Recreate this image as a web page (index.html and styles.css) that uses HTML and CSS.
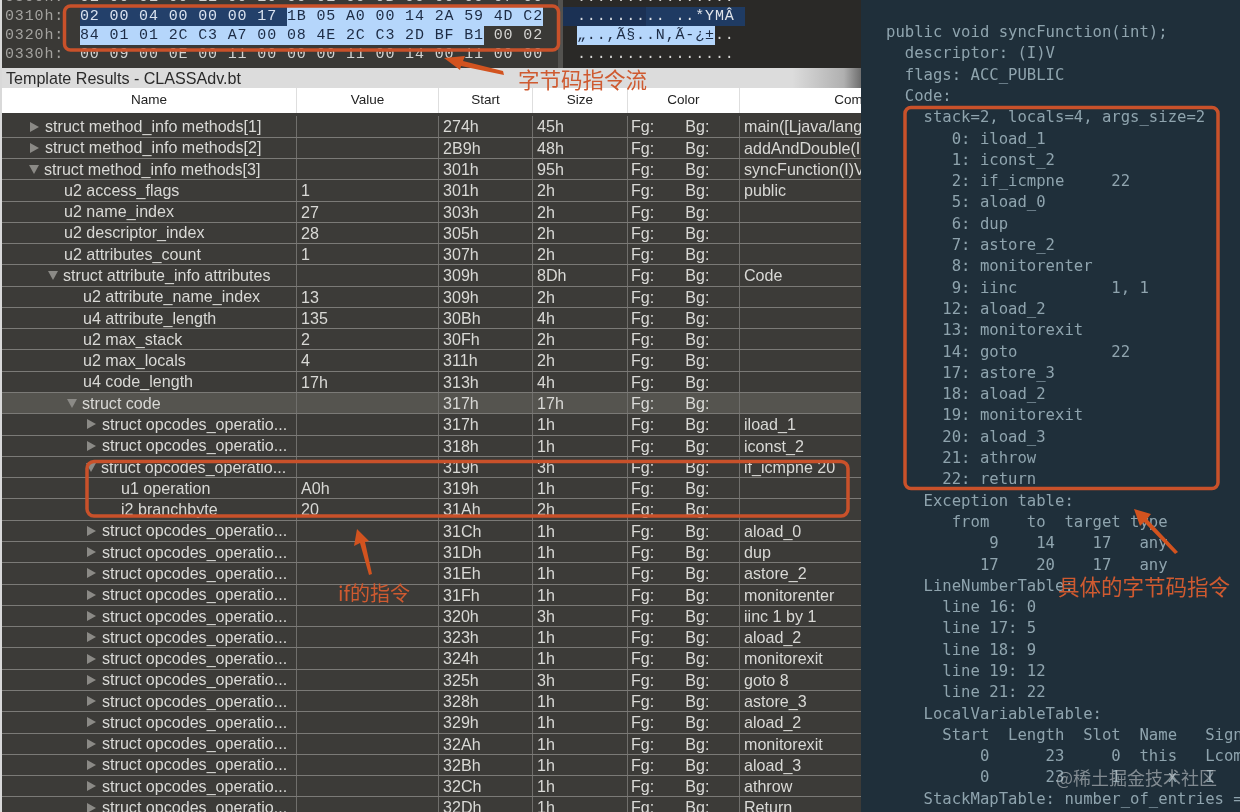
FILE: index.html
```html
<!DOCTYPE html>
<html lang="zh">
<head>
<meta charset="utf-8">
<title>Template Results - CLASSAdv.bt</title>
<link rel="stylesheet" href="styles.css">
</head>
<body>
<div class="page">
  <section class="editor">
    <div class="hex">
      <div class="hex-bytes">
        <div class="hex-row"><span class="addr">0300h:</span><span class="bytes">01 00 01 00 1E 00 10 00 01 00 0B 00 00 00 07 00</span></div>
        <div class="hex-row"><span class="addr">0310h:</span><span class="bytes"><span class="sel-dark">02 00 04 00 00 00 17 </span><span class="sel-light">1B 05 A0 00 14 2A 59 4D C2</span></span></div>
        <div class="hex-row"><span class="addr">0320h:</span><span class="bytes"><span class="sel-light">84 01 01 2C C3 A7 00 08 4E 2C C3 2D BF B1</span> 00 02</span></div>
        <div class="hex-row"><span class="addr">0330h:</span><span class="bytes">00 09 00 0E 00 11 00 00 00 11 00 14 00 11 00 00</span></div>
      </div>
      <div class="hex-ascii">
        <div class="ascii-row">................</div>
        <div class="ascii-row"><span class="sel-deep">.......</span><span class="sel-navy">.. ..*YMÂ</span></div>
        <div class="ascii-row"><span class="sel-light">„..,Ã§..N,Ã-¿±</span>..</div>
        <div class="ascii-row">................</div>
      </div>
    </div>
    <div class="title">Template Results - CLASSAdv.bt</div>
    <div class="row head"><span>Name</span><span>Value</span><span>Start</span><span>Size</span><span>Color</span><span>Comment</span></div>
    <div class="rows">
      <div class="row"><span class="name l0"><i class="tri"></i>struct method_info methods[1]</span><span></span><span>274h</span><span>45h</span><span class="fgbg"><b>Fg:</b><b>Bg:</b></span><span>main([Ljava/lang/String;)V</span></div>
      <div class="row"><span class="name l0"><i class="tri"></i>struct method_info methods[2]</span><span></span><span>2B9h</span><span>48h</span><span class="fgbg"><b>Fg:</b><b>Bg:</b></span><span>addAndDouble(II)V</span></div>
      <div class="row"><span class="name l0"><i class="tri open"></i>struct method_info methods[3]</span><span></span><span>301h</span><span>95h</span><span class="fgbg"><b>Fg:</b><b>Bg:</b></span><span>syncFunction(I)V</span></div>
      <div class="row"><span class="name l1">u2 access_flags</span><span>1</span><span>301h</span><span>2h</span><span class="fgbg"><b>Fg:</b><b>Bg:</b></span><span>public</span></div>
      <div class="row"><span class="name l1">u2 name_index</span><span>27</span><span>303h</span><span>2h</span><span class="fgbg"><b>Fg:</b><b>Bg:</b></span><span></span></div>
      <div class="row"><span class="name l1">u2 descriptor_index</span><span>28</span><span>305h</span><span>2h</span><span class="fgbg"><b>Fg:</b><b>Bg:</b></span><span></span></div>
      <div class="row"><span class="name l1">u2 attributes_count</span><span>1</span><span>307h</span><span>2h</span><span class="fgbg"><b>Fg:</b><b>Bg:</b></span><span></span></div>
      <div class="row"><span class="name l1"><i class="tri open"></i>struct attribute_info attributes</span><span></span><span>309h</span><span>8Dh</span><span class="fgbg"><b>Fg:</b><b>Bg:</b></span><span>Code</span></div>
      <div class="row"><span class="name l2">u2 attribute_name_index</span><span>13</span><span>309h</span><span>2h</span><span class="fgbg"><b>Fg:</b><b>Bg:</b></span><span></span></div>
      <div class="row"><span class="name l2">u4 attribute_length</span><span>135</span><span>30Bh</span><span>4h</span><span class="fgbg"><b>Fg:</b><b>Bg:</b></span><span></span></div>
      <div class="row"><span class="name l2">u2 max_stack</span><span>2</span><span>30Fh</span><span>2h</span><span class="fgbg"><b>Fg:</b><b>Bg:</b></span><span></span></div>
      <div class="row"><span class="name l2">u2 max_locals</span><span>4</span><span>311h</span><span>2h</span><span class="fgbg"><b>Fg:</b><b>Bg:</b></span><span></span></div>
      <div class="row"><span class="name l2">u4 code_length</span><span>17h</span><span>313h</span><span>4h</span><span class="fgbg"><b>Fg:</b><b>Bg:</b></span><span></span></div>
      <div class="row current"><span class="name l2"><i class="tri open"></i>struct code</span><span></span><span>317h</span><span>17h</span><span class="fgbg"><b>Fg:</b><b>Bg:</b></span><span></span></div>
      <div class="row"><span class="name l3"><i class="tri"></i>struct opcodes_operatio...</span><span></span><span>317h</span><span>1h</span><span class="fgbg"><b>Fg:</b><b>Bg:</b></span><span>iload_1</span></div>
      <div class="row"><span class="name l3"><i class="tri"></i>struct opcodes_operatio...</span><span></span><span>318h</span><span>1h</span><span class="fgbg"><b>Fg:</b><b>Bg:</b></span><span>iconst_2</span></div>
      <div class="row"><span class="name l3"><i class="tri open"></i>struct opcodes_operatio...</span><span></span><span>319h</span><span>3h</span><span class="fgbg"><b>Fg:</b><b>Bg:</b></span><span>if_icmpne 20</span></div>
      <div class="row"><span class="name l4">u1 operation</span><span>A0h</span><span>319h</span><span>1h</span><span class="fgbg"><b>Fg:</b><b>Bg:</b></span><span></span></div>
      <div class="row"><span class="name l4">i2 branchbyte</span><span>20</span><span>31Ah</span><span>2h</span><span class="fgbg"><b>Fg:</b><b>Bg:</b></span><span></span></div>
      <div class="row"><span class="name l3"><i class="tri"></i>struct opcodes_operatio...</span><span></span><span>31Ch</span><span>1h</span><span class="fgbg"><b>Fg:</b><b>Bg:</b></span><span>aload_0</span></div>
      <div class="row"><span class="name l3"><i class="tri"></i>struct opcodes_operatio...</span><span></span><span>31Dh</span><span>1h</span><span class="fgbg"><b>Fg:</b><b>Bg:</b></span><span>dup</span></div>
      <div class="row"><span class="name l3"><i class="tri"></i>struct opcodes_operatio...</span><span></span><span>31Eh</span><span>1h</span><span class="fgbg"><b>Fg:</b><b>Bg:</b></span><span>astore_2</span></div>
      <div class="row"><span class="name l3"><i class="tri"></i>struct opcodes_operatio...</span><span></span><span>31Fh</span><span>1h</span><span class="fgbg"><b>Fg:</b><b>Bg:</b></span><span>monitorenter</span></div>
      <div class="row"><span class="name l3"><i class="tri"></i>struct opcodes_operatio...</span><span></span><span>320h</span><span>3h</span><span class="fgbg"><b>Fg:</b><b>Bg:</b></span><span>iinc 1 by 1</span></div>
      <div class="row"><span class="name l3"><i class="tri"></i>struct opcodes_operatio...</span><span></span><span>323h</span><span>1h</span><span class="fgbg"><b>Fg:</b><b>Bg:</b></span><span>aload_2</span></div>
      <div class="row"><span class="name l3"><i class="tri"></i>struct opcodes_operatio...</span><span></span><span>324h</span><span>1h</span><span class="fgbg"><b>Fg:</b><b>Bg:</b></span><span>monitorexit</span></div>
      <div class="row"><span class="name l3"><i class="tri"></i>struct opcodes_operatio...</span><span></span><span>325h</span><span>3h</span><span class="fgbg"><b>Fg:</b><b>Bg:</b></span><span>goto 8</span></div>
      <div class="row"><span class="name l3"><i class="tri"></i>struct opcodes_operatio...</span><span></span><span>328h</span><span>1h</span><span class="fgbg"><b>Fg:</b><b>Bg:</b></span><span>astore_3</span></div>
      <div class="row"><span class="name l3"><i class="tri"></i>struct opcodes_operatio...</span><span></span><span>329h</span><span>1h</span><span class="fgbg"><b>Fg:</b><b>Bg:</b></span><span>aload_2</span></div>
      <div class="row"><span class="name l3"><i class="tri"></i>struct opcodes_operatio...</span><span></span><span>32Ah</span><span>1h</span><span class="fgbg"><b>Fg:</b><b>Bg:</b></span><span>monitorexit</span></div>
      <div class="row"><span class="name l3"><i class="tri"></i>struct opcodes_operatio...</span><span></span><span>32Bh</span><span>1h</span><span class="fgbg"><b>Fg:</b><b>Bg:</b></span><span>aload_3</span></div>
      <div class="row"><span class="name l3"><i class="tri"></i>struct opcodes_operatio...</span><span></span><span>32Ch</span><span>1h</span><span class="fgbg"><b>Fg:</b><b>Bg:</b></span><span>athrow</span></div>
      <div class="row"><span class="name l3"><i class="tri"></i>struct opcodes_operatio...</span><span></span><span>32Dh</span><span>1h</span><span class="fgbg"><b>Fg:</b><b>Bg:</b></span><span>Return</span></div>
    </div>
  </section>
  <pre class="terminal">public void syncFunction(int);
  descriptor: (I)V
  flags: ACC_PUBLIC
  Code:
    stack=2, locals=4, args_size=2
       0: iload_1
       1: iconst_2
       2: if_icmpne     22
       5: aload_0
       6: dup
       7: astore_2
       8: monitorenter
       9: iinc          1, 1
      12: aload_2
      13: monitorexit
      14: goto          22
      17: astore_3
      18: aload_2
      19: monitorexit
      20: aload_3
      21: athrow
      22: return
    Exception table:
       from    to  target type
           9    14    17   any
          17    20    17   any
    LineNumberTable:
      line 16: 0
      line 17: 5
      line 18: 9
      line 19: 12
      line 21: 22
    LocalVariableTable:
      Start  Length  Slot  Name   Signature
          0      23     0  this   Lcom/example/CLASSAdv;
          0      23     1     x   I
    StackMapTable: number_of_entries = 4</pre>
  <svg class="marks" width="1240" height="812" viewBox="0 0 1240 812" aria-hidden="true">
    <g fill="none" stroke="#c9512a" stroke-width="3.5">
      <rect x="64.5" y="6" width="494" height="44" rx="6"/>
      <rect x="905" y="107.5" width="313" height="381" rx="6"/>
      <rect x="87" y="461.5" width="761" height="54.5" rx="7"/>
    </g>
    <g fill="#d2531f">
      <polygon points="503,71 504,75 461,66 460,70 444,58 465,56 463,61"/>
      <polygon points="1178,552 1175,554 1144,522 1140,526 1134,509 1151,514 1147,519"/>
      <polygon points="372,574 369,575 360,543 354,546 357,529 369,541 365,542"/>
    </g>
  </svg>
  <span class="note note-stream">字节码指令流</span>
  <span class="note note-if">if的指令</span>
  <span class="note note-code">具体的字节码指令</span>
  <span class="watermark">@稀土掘金技术社区</span>
</div>
</body>
</html>
```
FILE: styles.css
```css
* { box-sizing: border-box; }
html, body { margin: 0; padding: 0; background: #1f2f3a; }
.page {
  position: relative;
  display: flex;
  width: 1240px;
  height: 812px;
  overflow: hidden;
  filter: blur(0.35px);
}
.editor {
  width: 861px;
  height: 812px;
  flex: none;
  overflow: hidden;
  padding-left: 2px;
  background: #d9d9d9;
  font-family: "Liberation Sans", Arial, sans-serif;
}
.hex {
  display: flex;
  height: 68px;
  background: #2a2927;
  overflow: hidden;
  font-family: "Liberation Mono", monospace;
  font-size: 15px;
  letter-spacing: 0.85px;
  line-height: 19px;
}
.hex-bytes {
  width: 561px;
  flex: none;
  margin-top: -12.5px;
  height: 92px;
  background: #3a3936;
  border-right: 5px solid #53524f;
  color: #c9c9c6;
}
.hex-row {
  display: flex;
  height: 19px;
  white-space: pre;
}
.addr {
  width: 78px;
  flex: none;
  padding-left: 3px;
  color: #a3a29f;
}
.bytes { color: #d4d4d2; }
.sel-dark {
  display: inline-block;
  background: #23406a;
  color: #d9e2ef;
}
.sel-light {
  display: inline-block;
  background: #b5d6fb;
  color: #1c2b44;
}
.sel-deep {
  display: inline-block;
  background: #1b3154;
  color: #d8dde4;
  margin-left: -14px;
  padding-left: 14px;
}
.sel-navy {
  display: inline-block;
  background: #1f3b63;
  color: #e0e4ea;
  padding-right: 10px;
}
.hex-ascii {
  flex: 1;
  margin-top: -12.5px;
  height: 92px;
  padding-left: 14px;
  color: #d8d8d5;
}
.ascii-row {
  height: 19px;
  white-space: pre;
}
.title {
  height: 20px;
  padding-left: 4px;
  font-size: 16.1px;
  line-height: 21px;
  color: #2a2a2a;
  background: linear-gradient(90deg, #dcdcdc 0, #dcdcdc 92%, #b0b0b0 98%, #6e6e6e 100%);
}
.row {
  display: grid;
  grid-template-columns: 295px 142px 94px 95px 112px 248px;
  height: 21.29px;
  border-bottom: 1px solid #7b7a77;
  background: #3c3b38;
  color: #d9d9d6;
  font-size: 16.1px;
  line-height: 21px;
  overflow: hidden;
}
.row > span {
  padding-left: 4px;
  border-right: 1px solid #706f6c;
  white-space: nowrap;
  overflow: hidden;
}
.row.head {
  height: 25px;
  border-bottom: 0;
  background: #fff;
  color: #222;
  font-size: 13.5px;
  line-height: 24px;
}
.row.head > span {
  padding-left: 0;
  text-align: center;
  border-right: 1px solid #dedede;
}
.rows {
  height: 699px;
  padding-top: 3.4px;
  background: #3c3b38;
  overflow: hidden;
}
.row.current { background: #55544f; }
.row > .name {
  display: flex;
  align-items: center;
}
.row > .l0 { padding-left: 43px; }
.row > .l1 { padding-left: 62px; }
.row > .l2 { padding-left: 81px; }
.row > .l3 { padding-left: 100px; }
.row > .l4 { padding-left: 119px; }
.tri {
  flex: none;
  width: 0;
  height: 0;
  margin-left: -15px;
  margin-right: 6px;
  border-style: solid;
  border-width: 5.5px 0 5.5px 9px;
  border-color: transparent transparent transparent #8b8a86;
}
.tri.open {
  border-width: 9px 5.5px 0 5.5px;
  border-color: #8b8a86 transparent transparent transparent;
  margin-left: -16px;
  margin-right: 5px;
}
.row > .fgbg {
  display: flex;
  gap: 31px;
  padding-left: 3px;
}
.fgbg b { font-weight: normal; }
.terminal {
  flex: 1;
  margin: 0;
  padding: 22.1px 0 0 25px;
  overflow: hidden;
  background: #1f2f3a;
  color: #8fa4ae;
  font-family: "DejaVu Sans Mono", monospace;
  font-size: 15.6px;
  line-height: 21.29px;
}
.marks {
  position: absolute;
  left: 0;
  top: 0;
  pointer-events: none;
}
.note {
  position: absolute;
  color: #cf5a30;
  font-family: "Noto Sans CJK SC", sans-serif;
  white-space: nowrap;
  line-height: 1;
}
.note-stream { left: 518px; top: 68px; font-size: 21.5px; }
.note-if { left: 338px; top: 583px; font-size: 20px; }
.note-code { left: 1058px; top: 575px; font-size: 21.5px; }
.watermark {
  position: absolute;
  left: 1056px;
  top: 768px;
  color: rgba(190, 196, 198, 0.62);
  font-family: "Noto Sans CJK SC", sans-serif;
  font-size: 18px;
  line-height: 1;
  white-space: nowrap;
}
```
